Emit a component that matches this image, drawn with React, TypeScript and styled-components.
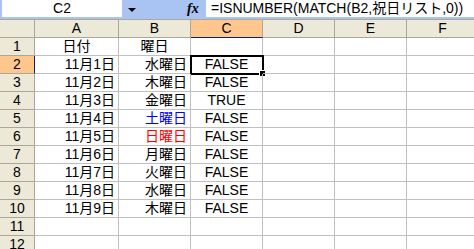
import React from 'react';
import styled, {createGlobalStyle} from 'styled-components';

const GlobalStyle = createGlobalStyle`
body {
margin: 0;
background: #ffffff;
overflow: hidden;
font-family: "Liberation Sans", "Noto Sans CJK JP", sans-serif;
}
`;

const Window = styled.div`
width: 474px;
height: 249px;
overflow: hidden;
background: #ffffff;
`;

const FormulaBar = styled.div`
display: flex;
align-items: flex-start;
height: 19px;
background-color: #a9c4f2;
`;

const NameBox = styled.div`
width: 120px;
height: 17px;
margin-left: 2px;
background: white;
font-size: 14px;
line-height: 17px;
text-align: center;
color: #000;
`;

const DropArrow = styled.div`
width: 0;
height: 0;
margin: 8px 0 0 6px;
border-left: 4px solid transparent;
border-right: 4px solid transparent;
border-top: 4px solid #000;
`;

const FxLabel = styled.div`
margin-left: 51px;
width: 19px;
height: 17px;
font-family: "Liberation Serif", serif;
font-style: italic;
font-weight: bold;
font-size: 14px;
line-height: 17px;
color: #000;
`;

const FormulaInput = styled.div`
flex: 1;
height: 17px;
background: white;
padding-left: 5px;
font-size: 14px;
line-height: 17px;
white-space: nowrap;
color: #000;
`;

const Sheet = styled.div`
display: grid;
grid-template-columns: 35px 84px 72px 72px 72px 72px 72px;
grid-auto-rows: 18px;
border-top: 1px solid #aca899;
`;

interface HeadProps {
    readonly $active?: boolean;
}

const ColHeader = styled.div<HeadProps>`
box-sizing: border-box;
background-color: ${(props) => props.$active ? '#ffc78e' : '#ece9d8'};
border-right: 1px solid #aca899;
border-bottom: 1px solid ${(props) => props.$active ? '#0a246a' : '#aca899'};
font-size: 14px;
line-height: 17px;
text-align: center;
color: #000;
`;

const RowHeader = styled.div<HeadProps>`
box-sizing: border-box;
background-color: ${(props) => props.$active ? '#ffc78e' : '#ece9d8'};
border-right: 1px solid ${(props) => props.$active ? '#0a246a' : '#aca899'};
border-bottom: 1px solid #aca899;
font-size: 14px;
line-height: 17px;
text-align: center;
color: #000;
`;

interface CellProps {
    readonly $align?: 'left' | 'center' | 'right';
    readonly $color?: string;
}

const Cell = styled.div<CellProps>`
position: relative;
box-sizing: border-box;
border-right: 1px solid #c0c0c0;
border-bottom: 1px solid #c0c0c0;
padding: 0 3px;
font-size: 14px;
line-height: 17px;
white-space: nowrap;
text-align: ${(props) => props.$align || 'left'};
color: ${(props) => props.$color || '#000'};
`;

const Selection = styled.div`
position: absolute;
left: -1px;
top: -1px;
width: 74px;
height: 20px;
box-sizing: border-box;
border: 2px solid #000;
pointer-events: none;
`;

const FillHandle = styled.div`
position: absolute;
right: -3px;
bottom: -3px;
width: 6px;
height: 6px;
background: #000;
border-left: 1px solid #fff;
border-top: 1px solid #fff;
box-sizing: border-box;
`;

const columns = ['A', 'B', 'C', 'D', 'E', 'F'];

const rows = [
    {date: '11月1日', day: '水曜日', result: 'FALSE'},
    {date: '11月2日', day: '木曜日', result: 'FALSE'},
    {date: '11月3日', day: '金曜日', result: 'TRUE'},
    {date: '11月4日', day: '土曜日', result: 'FALSE', color: '#0000ff'},
    {date: '11月5日', day: '日曜日', result: 'FALSE', color: '#ff0000'},
    {date: '11月6日', day: '月曜日', result: 'FALSE'},
    {date: '11月7日', day: '火曜日', result: 'FALSE'},
    {date: '11月8日', day: '水曜日', result: 'FALSE'},
    {date: '11月9日', day: '木曜日', result: 'FALSE'},
];

const App = () => {
    return (
        <Window>
            <GlobalStyle/>
            <FormulaBar>
                <NameBox>C2</NameBox>
                <DropArrow/>
                <FxLabel>fx</FxLabel>
                <FormulaInput>=ISNUMBER(MATCH(B2,祝日リスト,0))</FormulaInput>
            </FormulaBar>
            <Sheet>
                <ColHeader/>
                {columns.map((c) => (
                    <ColHeader key={c} $active={c === 'C'}>{c}</ColHeader>
                ))}

                <RowHeader>1</RowHeader>
                <Cell $align='center'>日付</Cell>
                <Cell $align='center'>曜日</Cell>
                <Cell/>
                <Cell/>
                <Cell/>
                <Cell/>

                {rows.map((r, i) => (
                    <React.Fragment key={r.date}>
                        <RowHeader $active={i === 0}>{i + 2}</RowHeader>
                        <Cell $align='right'>{r.date}</Cell>
                        <Cell $align='right' $color={r.color}>{r.day}</Cell>
                        <Cell $align='center'>
                            {r.result}
                            {i === 0 && (
                                <Selection>
                                    <FillHandle/>
                                </Selection>
                            )}
                        </Cell>
                        <Cell/>
                        <Cell/>
                        <Cell/>
                    </React.Fragment>
                ))}

                {[11, 12].map((n) => (
                    <React.Fragment key={n}>
                        <RowHeader>{n}</RowHeader>
                        <Cell/>
                        <Cell/>
                        <Cell/>
                        <Cell/>
                        <Cell/>
                        <Cell/>
                    </React.Fragment>
                ))}
            </Sheet>
        </Window>
    )
}

export default App;
